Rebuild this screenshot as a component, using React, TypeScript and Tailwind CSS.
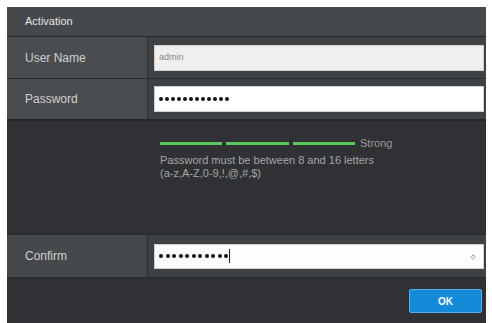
import React from 'react';

const font = { fontFamily: '"Liberation Sans", Arial, sans-serif' };

function Dots({ count, gap }: { count: number; gap: string }) {
  return (
    <div className={`flex items-center ${gap}`}>
      {Array.from({ length: count }).map((_, i) => (
        <span key={i} className="block h-[4px] w-[4px] rounded-full bg-[#111]" />
      ))}
    </div>
  );
}

export default function App() {
  return (
    <div className="h-[323px] w-[492px] overflow-hidden bg-white pl-[7px] pt-[7px]" style={font}>
      <div className="flex h-[316px] w-[479px] flex-col bg-[#2f3134]">
        {/* header */}
        <div className="flex h-[30px] items-center border-b border-[#26282a] bg-[#46494c] pl-[18px] text-[11px] text-[#e2e2e2]">
          Activation
        </div>

        {/* user name */}
        <div className="flex h-[42px] border-b border-[#2a2c2f] bg-[#3f4245]">
          <div className="flex w-[141px] items-center border-r border-[#2a2c2f] bg-[#4a4d50] pl-[18px] text-[12px] text-[#cfcfcf]">
            User Name
          </div>
          <div className="flex flex-1 items-center pl-[6px] pr-[2px]">
            <div className="flex h-[26px] w-full items-center border border-[#cfcfcf] bg-[#efefef] pl-[4px] text-[9px] text-[#888]">
              admin
            </div>
          </div>
        </div>

        {/* password */}
        <div className="flex h-[42px] border-b-[2px] border-[#232527] bg-[#3f4245]">
          <div className="flex w-[141px] items-center border-r border-[#2a2c2f] bg-[#4a4d50] pl-[18px] text-[12px] text-[#cfcfcf]">
            Password
          </div>
          <div className="flex flex-1 items-center pl-[6px] pr-[2px]">
            <div className="flex h-[26px] w-full items-center border border-[#cfcfcf] bg-white pl-[4px]">
              <Dots count={12} gap="gap-[2px]" />
            </div>
          </div>
        </div>

        {/* strength info */}
        <div className="h-[113px] pl-[153px] pt-[16px]">
          <div className="flex items-center">
            <span className="block h-[3px] w-[62px] bg-[#5cc75c]" />
            <span className="ml-[4px] block h-[3px] w-[63px] bg-[#5cc75c]" />
            <span className="ml-[4px] block h-[3px] w-[62px] bg-[#5cc75c]" />
            <span className="ml-[5px] text-[11px] leading-[12px] text-[#9a9a9a]">Strong</span>
          </div>
          <div className="mt-[5px] text-[11px] leading-[13px] text-[#a6a6a6]">
            Password must be between 8 and 16 letters
            <br />
            (a-z,A-Z,0-9,!,@,#,$)
          </div>
        </div>

        {/* confirm */}
        <div className="flex h-[44px] border-y border-[#26282a] bg-[#3f4245]">
          <div className="flex w-[141px] items-center border-r border-[#2a2c2f] bg-[#46494c] pl-[18px] text-[12px] text-[#cfcfcf]">
            Confirm
          </div>
          <div className="flex flex-1 items-center pl-[6px] pr-[2px]">
            <div className="flex h-[25px] w-full items-center border border-[#cfcfcf] bg-[#fbfdff] pl-[4px] pr-[6px]">
              <Dots count={11} gap="gap-[2.5px]" />
              <span className="ml-[1px] block h-[14px] w-[1px] bg-[#222]" />
              <svg className="ml-auto h-[8px] w-[8px]" viewBox="0 0 10 10" fill="none" stroke="#aaa" strokeWidth="1.4">
                <path d="M2 7 L5 3.5 L8 7" />
                <path d="M3.5 8.5 L6.5 8.5" />
              </svg>
            </div>
          </div>
        </div>

        {/* footer */}
        <div className="flex flex-1 items-start justify-end pr-[4px] pt-[11px]">
          <button className="flex h-[24px] w-[73px] items-center justify-center rounded-[2px] border border-[#4fb3f0] bg-[#158ad8] text-[10px] font-bold text-white">
            OK
          </button>
        </div>
      </div>
    </div>
  );
}
